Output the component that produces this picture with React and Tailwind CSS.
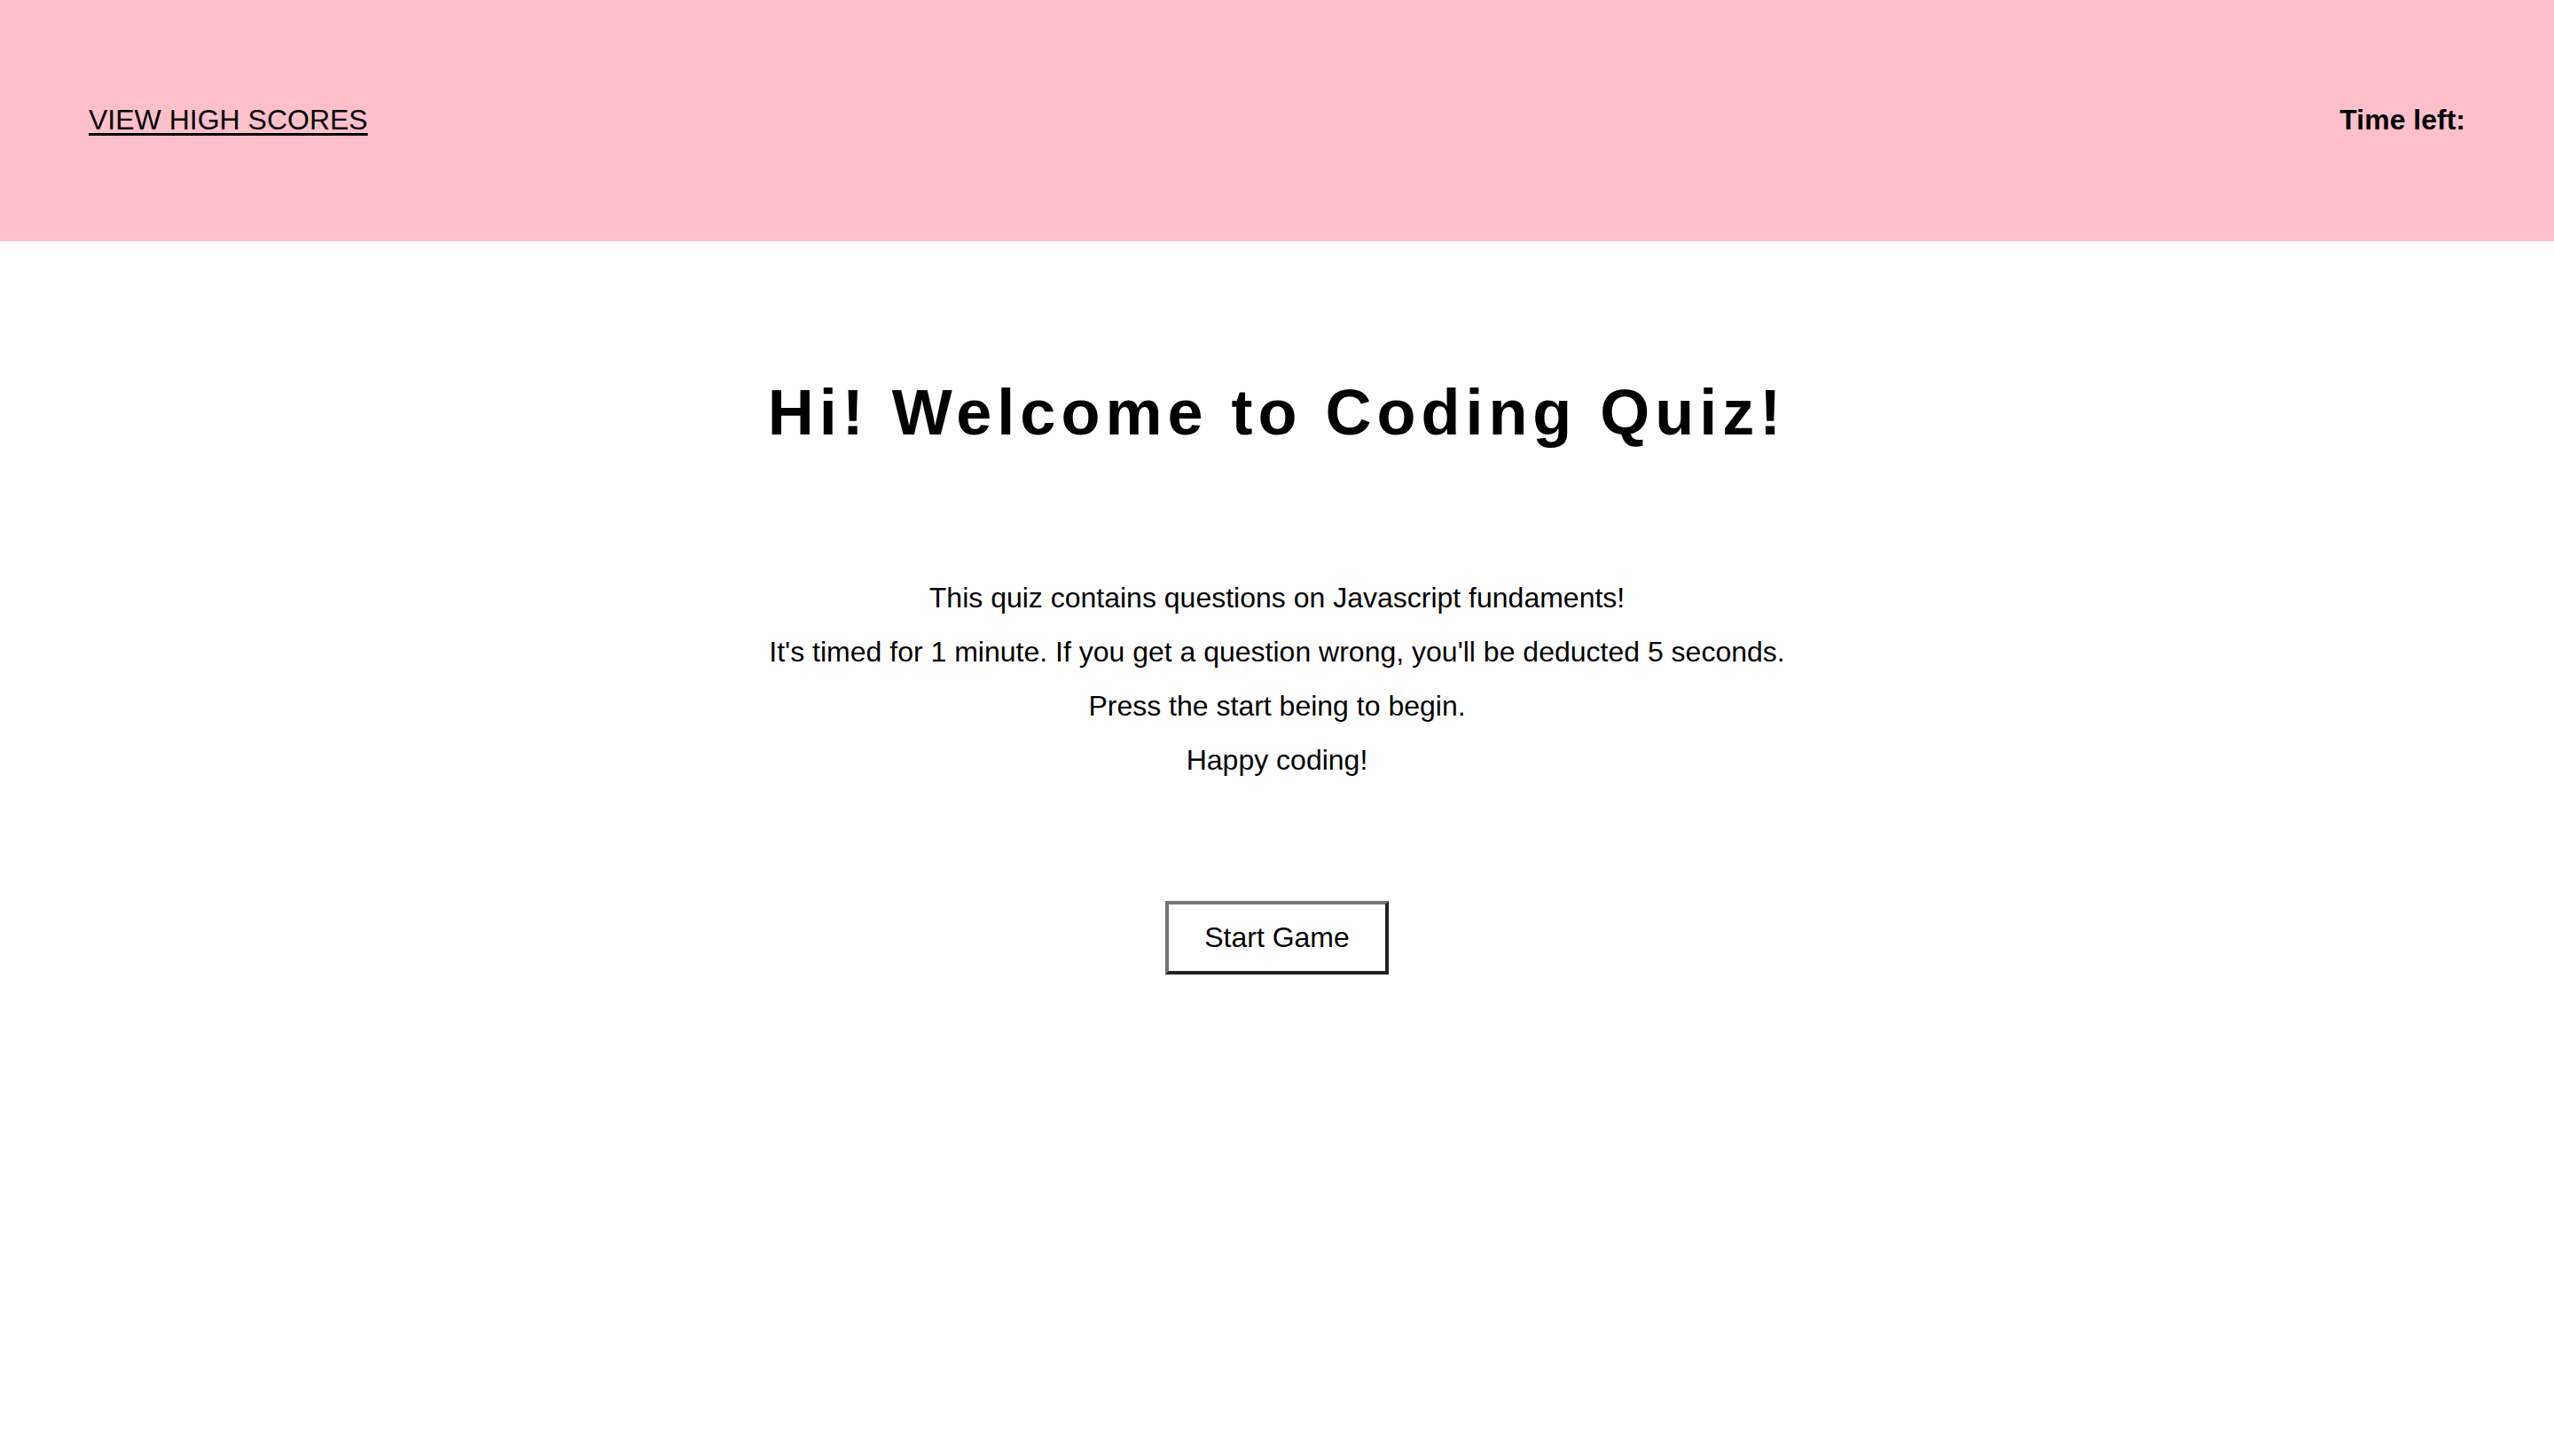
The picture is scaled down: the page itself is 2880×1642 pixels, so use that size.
// App.jsx - coding quiz start screen
import React from 'react';

function Header() {
  return (
    <header className="flex h-[272px] items-center justify-between bg-[#ffc0cb] px-[100px]">
      <a href="#" className="-mt-[2px] text-[32px] leading-[37px] text-black underline underline-offset-[4px] decoration-[3px]">
        VIEW HIGH SCORES
      </a>
      <div className="-mt-[2px] text-[32px] font-bold leading-[37px] text-black">Time left:</div>
    </header>
  );
}

const lines = [
  'This quiz contains questions on Javascript fundaments!',
  "It's timed for 1 minute. If you get a question wrong, you'll be deducted 5 seconds.",
  'Press the start being to begin.',
  'Happy coding!'
];

function StartScreen() {
  return (
    <main className="flex flex-col items-center text-center text-black">
      <h1 className="mt-[157px] text-[72px] font-bold leading-[72px] tracking-[6px]">
        Hi! Welcome to Coding Quiz!
      </h1>
      <div className="mt-[143px]">
        {lines.map((line) => (
          <p key={line} className="text-[32px] leading-[61px]">
            {line}
          </p>
        ))}
      </div>
      <button
        type="button"
        className="mt-[128px] border-4 border-t-[#767676] border-l-[#767676] border-b-[#212121] border-r-[#212121] bg-white px-[40px] py-[20px] text-[32px] leading-[35px] text-black"
      >
        Start Game
      </button>
    </main>
  );
}

export default function App() {
  return (
    <div className="min-h-screen bg-white font-['Liberation_Sans',Arial,sans-serif]">
      <Header />
      <StartScreen />
    </div>
  );
}
